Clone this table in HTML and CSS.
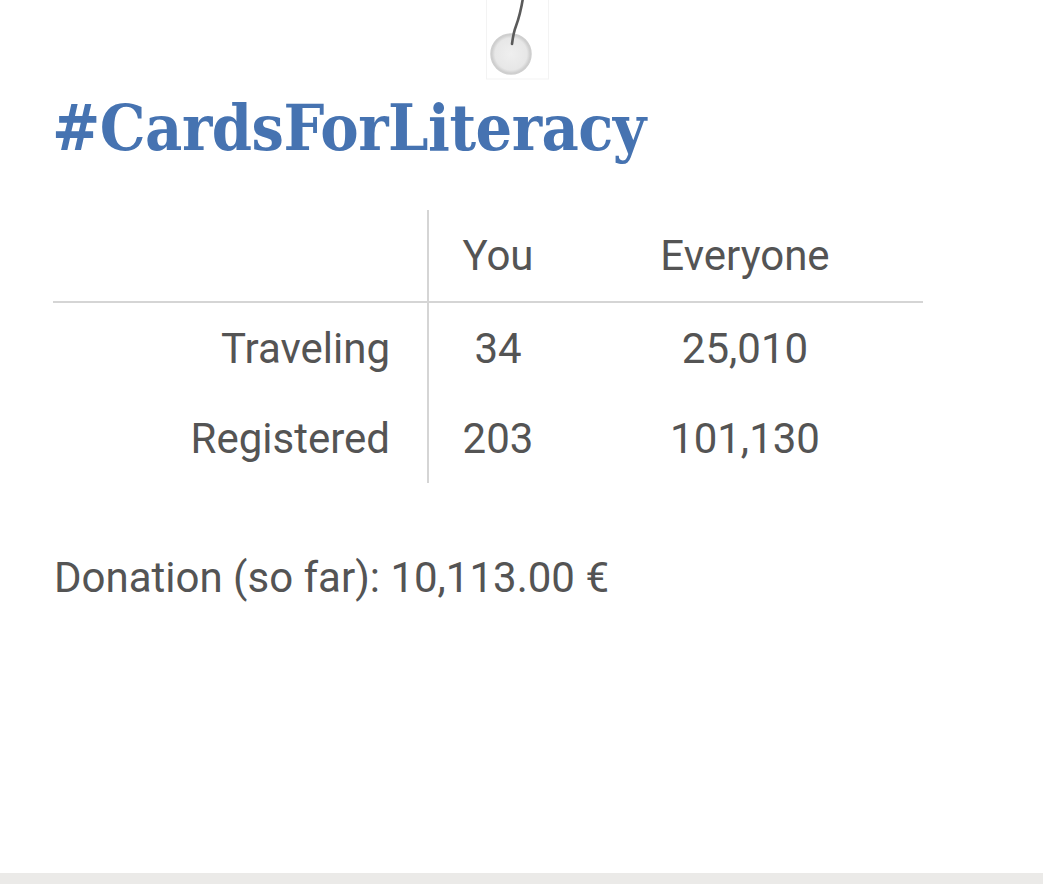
FILE: index.html
```html
<!DOCTYPE html>
<html lang="en">
<head>
<meta charset="utf-8">
<title>#CardsForLiteracy</title>
<link rel="stylesheet" href="styles.css">
</head>
<body>
<div class="page">
  <div class="ornament-row">
    <svg class="ornament" width="64" height="80" viewBox="0 0 64 80">
      <rect x="0.5" y="-1" width="62" height="80" fill="#fff" stroke="#f3f3f3"/>
      <defs>
        <radialGradient id="g" cx="50%" cy="50%" r="50%">
          <stop offset="0" stop-color="#efefef"/>
          <stop offset="0.8" stop-color="#e7e7e7"/>
          <stop offset="1" stop-color="#c8c8c8"/>
        </radialGradient>
        <filter id="soft" x="-20%" y="-20%" width="140%" height="140%">
          <feGaussianBlur stdDeviation="0.7"/>
        </filter>
      </defs>
      <g filter="url(#soft)">
        <circle cx="25" cy="54" r="20" fill="url(#g)" stroke="#cfcfcf" stroke-width="1.5"/>
        <path d="M37 -2 C35 10 33 18 30 26 C28 31 27 36 26 44" fill="none" stroke="#5a5a5a" stroke-width="2.6" stroke-linecap="round"/>
      </g>
    </svg>
  </div>
  <h1 class="title">#CardsForLiteracy</h1>
  <table class="stats">
    <thead>
      <tr>
        <th class="label"></th>
        <th class="you">You</th>
        <th class="all">Everyone</th>
      </tr>
    </thead>
    <tbody>
      <tr>
        <td class="label">Traveling</td>
        <td class="you">34</td>
        <td class="all">25,010</td>
      </tr>
      <tr>
        <td class="label">Registered</td>
        <td class="you">203</td>
        <td class="all">101,130</td>
      </tr>
    </tbody>
  </table>
  <p class="donation">Donation (so far): 10,113.00 €</p>
</div>
<div class="bottom-bar"></div>
</body>
</html>
```
FILE: styles.css
```css
html, body {
  margin: 0;
  padding: 0;
  background: #fff;
}
body {
  width: 1043px;
  height: 884px;
  position: relative;
  overflow: hidden;
  font-family: Roboto, "Liberation Sans", sans-serif;
  color: #545454;
}
.page {
  padding-left: 53px;
  height: 873px;
}
.ornament-row {
  display: flex;
  padding-left: 433px;
  height: 80px;
}
.ornament {
  display: block;
}
.title {
  margin: 12px 0 0 -1px;
  font-family: "DejaVu Serif", "Liberation Serif", serif;
  font-weight: bold;
  font-size: 64px;
  font-stretch: condensed;
  line-height: 72px;
  color: #4673b1;
  letter-spacing: -0.5px;
}
.stats {
  margin-top: 46px;
  border-collapse: collapse;
  font-size: 42px;
  color: #545454;
}
.stats th, .stats td {
  padding: 0;
  font-weight: normal;
  height: 90px;
  vertical-align: middle;
}
.stats thead th {
  height: 91px;
  border-bottom: 2px solid #d5d5d5;
}
.stats .label {
  width: 337px;
  padding-right: 37px;
  text-align: right;
  border-right: 2px solid #d5d5d5;
}
.stats .you {
  width: 138px;
  text-align: center;
}
.stats .all {
  width: 356px;
  text-align: center;
}
.donation {
  margin: 70px 0 0 1px;
  font-size: 42px;
  line-height: 50px;
}
.bottom-bar {
  position: absolute;
  left: 0;
  right: 0;
  bottom: 0;
  height: 11px;
  background: #ebeae8;
}
```
